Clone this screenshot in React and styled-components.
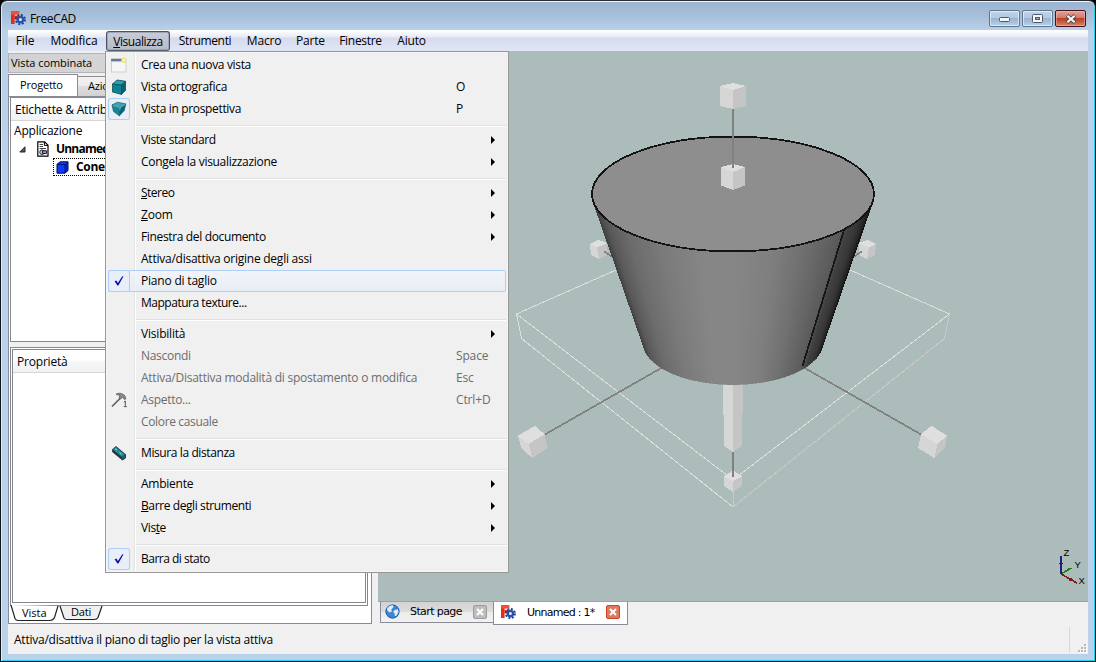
import React from 'react';
import styled, { createGlobalStyle, css } from 'styled-components';

const Global = createGlobalStyle`
  html, body { margin: 0; padding: 0; background: #000; }
  body { font-family: "Open Sans", "Noto Sans", sans-serif; font-size: 12px; color: #000; overflow: hidden; }
  * { box-sizing: border-box; }
  svg { display: block; }
`;

/* ---------- window chrome ---------- */
const Window = styled.div`
  position: relative;
  width: 1096px;
  height: 662px;
  display: flex;
  flex-direction: column;
  background: linear-gradient(180deg, #9ab3d0 0, #a7bfda 15px, #bad1ea 30px, #b9d1ea 100%);
  border: 1px solid #101418;
  border-top-color: #2a2c30;
  border-radius: 7px 7px 0 0;
  box-shadow: inset 1px 0 0 #dfeaf6, inset 0 1px 0 #eef5fb, inset -1px -1px 0 #26d0ee;
  padding: 0 7px 7px 7px;
`;
const TitleBar = styled.header`
  height: 29px;
  flex: none;
  display: flex;
  align-items: center;
  padding: 5px 2px 0 2px;
`;
const TitleText = styled.span`
  margin-left: 4px;
  flex: 1;
  line-height: 16px;
  padding-top: 2px;
  letter-spacing: -0.35px;
`;
const Controls = styled.div`
  display: flex;
  gap: 2px;
`;
const ControlButton = styled.span`
  width: 31px;
  height: 17px;
  margin-top: 1px;
  display: flex;
  align-items: center;
  justify-content: center;
  border: 1px solid ${p => (p.$close ? '#43101c' : '#5f7590')};
  border-radius: 2px;
  background: ${p => (p.$close
    ? 'linear-gradient(180deg,#e0a296 0,#d3796a 7px,#b93d22 7px,#c65a40 11px,#d78a6b 100%)'
    : 'linear-gradient(180deg,#c0d3e8 0,#b3c9e1 7px,#98b4d0 7px,#a5c0dc 11px,#b9d2ea 100%)')};
  box-shadow: inset 0 0 0 1px ${p => (p.$close ? 'rgba(255,200,190,.45)' : 'rgba(255,255,255,.55)')};
`;
const Client = styled.div`
  flex: 1;
  min-height: 0;
  display: flex;
  flex-direction: column;
  background: #f0f0f0;
`;

/* ---------- menu bar ---------- */
const MenuBar = styled.nav`
  height: 21px;
  flex: none;
  display: flex;
  align-items: stretch;
  background: linear-gradient(180deg, #fff 0, #e6ecf5 7px, #d5daee 8px, #e1e6f6 100%);
`;
const MenuTitle = styled.span`
  width: ${p => p.$w}px;
  display: flex;
  align-items: center;
  justify-content: center;
  line-height: 19px;
  letter-spacing: ${p => p.$ls || 0}px;
  ${p => p.$open && css`
    margin-top: 1px;
    border: 1px solid #4a5260;
    border-bottom-color: #5a6270;
    border-radius: 3px;
    background: linear-gradient(180deg, #c8ccd6 0, #b6bbcb 100%);
    box-shadow: inset 0 0 0 1px #a0a6b4;
  `}
`;

/* ---------- body ---------- */
const Body = styled.div`
  height: 574px;
  flex: none;
  display: flex;
`;
const Dock = styled.aside`
  width: 364px;
  flex: none;
  display: flex;
  flex-direction: column;
  padding-top: 2px;
`;
const DockTitle = styled.div`
  height: 20px;
  flex: none;
  border: 1px solid #b4b4b4;
  background: linear-gradient(90deg, #d2d2d2, #dcdcdc);
  line-height: 18px;
  padding-left: 2px;
  font-size: 11px;
  letter-spacing: -0.05px;
`;
const TabRow = styled.div`
  height: 22px;
  flex: none;
  margin-top: 1px;
  display: flex;
  align-items: flex-end;
`;
const DockTab = styled.span`
  width: ${p => p.$w}px;
  height: ${p => (p.$on ? 22 : 20)}px;
  flex: none;
  border: 1px solid #898c95;
  border-bottom: 0;
  border-left-width: ${p => (p.$on ? 1 : 0)}px;
  background: ${p => (p.$on ? '#fff' : 'linear-gradient(180deg,#f2f2f2,#ebebeb 50%,#dddddd 50%,#d2d2d2)')};
  font-size: 11px;
  line-height: ${p => (p.$on ? 19 : 18)}px;
  padding-left: ${p => (p.$on ? 11 : 10)}px;
  letter-spacing: -0.2px;
`;
const DockPane = styled.div`
  flex: 1;
  min-height: 0;
  display: flex;
  flex-direction: column;
  border: 1px solid #898c95;
  background: #fff;
  padding: 0 3px 17px 1px;
  margin-bottom: 1px;
`;
const Tree = styled.div`
  height: 245px;
  flex: none;
  border: 1px solid #828790;
  background: #fff;
  white-space: nowrap;
  overflow: hidden;
`;
const Header = styled.div`
  height: 23px;
  line-height: 23px;
  margin-bottom: 1px;
  padding-left: 4px;
  background: linear-gradient(180deg, #fff 0, #fff 45%, #f5f6f8 55%, #f1f2f4 100%);
  border-bottom: 1px solid #d5d5d5;
  letter-spacing: ${p => p.$ls}px;
`;
const TreeRow = styled.div`
  height: 18px;
  display: flex;
  align-items: center;
  line-height: 18px;
  padding-left: ${p => p.$indent}px;
  font-weight: ${p => (p.$bold ? 700 : 400)};
  letter-spacing: ${p => p.$ls || 0}px;
`;
const FocusBox = styled.span`
  display: flex;
  align-items: center;
  gap: 7px;
  width: 120px;
  height: 18px;
  padding-left: 2px;
  border: 1px dotted #000;
`;
const TreeGap = styled.span`
  width: ${p => p.$w}px;
`;
const Splitter = styled.div`
  height: 5px;
  flex: none;
  background: #f0f0f0;
`;
const PropertyFrame = styled.div`
  flex: 1;
  border: 1px solid #828790;
  padding: 1px 1px 2px;
  display: flex;
`;
const PropertyBox = styled.div`
  flex: 1;
  border: 1px solid #828790;
  background: #fff;
`;
const SheetTabs = styled.svg`
  height: 18px;
  margin: -1px 0 -17px;
  flex: none;
`;

const Main = styled.main`
  flex: 1;
  display: flex;
  flex-direction: column;
  padding-left: 6px;
`;
const View = styled.svg`
  flex: none;
  background: #abbcbb;
`;
const DocTabs = styled.div`
  height: 24px;
  flex: none;
  display: flex;
  align-items: flex-start;
  border-top: 1px solid #a0a0a0;
  padding-left: 2px;
  font-family: "DejaVu Sans", sans-serif;
`;
const DocTab = styled.span`
  width: ${p => p.$w}px;
  height: ${p => (p.$on ? 23 : 21)}px;
  display: flex;
  align-items: center;
  border: 1px solid #898c95;
  border-top: 0;
  border-right-width: ${p => (p.$on ? 1 : 0)}px;
  background: ${p => (p.$on ? '#fff' : 'linear-gradient(180deg,#d2d2d2 0,#dddddd 50%,#ebebeb 50%,#f2f2f2 100%)')};
  padding: 0 ${p => (p.$on ? 7 : 6)}px ${p => (p.$on ? 2 : 1)}px ${p => (p.$on ? 6 : 4)}px;
  font-size: 11px;
  letter-spacing: ${p => p.$ls}px;
  white-space: pre;
`;
const DocLabel = styled.span`
  flex: 1;
  padding-left: ${p => p.$pad}px;
`;
const CloseBox = styled.span`
  width: 14px;
  height: 14px;
  display: flex;
  align-items: center;
  justify-content: center;
  border: 1px solid ${p => (p.$hot ? '#c8422c' : '#9c9c9c')};
  border-radius: 2px;
  background: ${p => (p.$hot ? '#dd7a5c' : '#bdbdbd')};
`;

const StatusBar = styled.footer`
  flex: 1;
  display: flex;
  align-items: flex-start;
  padding: 2px 0 0 6px;
  line-height: 25px;
`;
const StatusText = styled.span`
  flex: 1;
  letter-spacing: ${p => p.$ls}px;
`;
const StatusRule = styled.span`
  width: 1px;
  height: 25px;
  background: #d7d7d7;
  margin-right: 6px;
`;

/* ---------- drop-down ---------- */
const Dropdown = styled.div`
  position: absolute;
  left: 104px;
  top: 50px;
  width: 404px;
  height: 522px;
  border: 1px solid #979797;
  padding: 2px;
  background: linear-gradient(90deg, #f0f0f0 28px, #e2e3e3 28px, #e2e3e3 29px, #fff 29px, #fff 30px, #f0f0f0 30px);
  box-shadow: inset 0 0 0 1px #f5f5f5;
`;
const Item = styled.div`
  height: 22px;
  display: flex;
  align-items: center;
  color: ${p => (p.$off ? '#6d6d6d' : '#000')};
  border-radius: 2px;
  ${p => p.$hover && css`
    background: linear-gradient(180deg, rgba(242,246,252,.75), rgba(228,236,247,.75));
    box-shadow: inset 0 0 0 1px #aecff7;
  `}
`;
const IconCell = styled.span`
  width: 22px;
  height: 22px;
  flex: none;
  display: flex;
  align-items: center;
  justify-content: center;
  border-radius: 3px;
  ${p => p.$checked && css`
    background: #e8eff8;
    box-shadow: inset 0 0 0 1px #aecff7;
  `}
`;
const ItemText = styled.span`
  width: 326px;
  flex: none;
  padding-left: 11px;
  line-height: 20px;
  white-space: nowrap;
  letter-spacing: ${p => p.$ls}px;
`;
const Shortcut = styled.span`
  width: 35px;
  line-height: 20px;
  letter-spacing: -0.15px;
`;
const Arrow = styled.span`
  border-left: 4px solid #000;
  border-top: 4px solid transparent;
  border-bottom: 4px solid transparent;
`;
const Rule = styled.div`
  height: 2px;
  margin: 5px 0 2px 28px;
  border-top: 1px solid #e0e0e0;
  border-bottom: 1px solid #fff;
`;

/* ---------- icons ---------- */
const Logo = () => (
  <svg width="16" height="16" viewBox="0 0 16 16">
    <rect x="1" y="1" width="3.6" height="13" fill="#e62a18" />
    <rect x="1" y="1" width="8.4" height="3.6" fill="#f4502a" />
    <rect x="4.6" y="6" width="3.4" height="3.2" fill="#d42814" />
    <circle cx="10.4" cy="9.6" r="4.6" fill="none" stroke="#1f3f92" strokeWidth="1.9" strokeDasharray="1.9 1.71" />
    <circle cx="10.4" cy="9.6" r="2.7" fill="#e4ecf8" stroke="#2a52aa" strokeWidth="2.4" />
  </svg>
);
const NewView = () => (
  <svg width="16" height="16" viewBox="0.5 0 16 16">
    <rect x="1" y="2" width="14.5" height="13" fill="#f6f6f4" stroke="#cfcfcf" />
    <rect x=".6" y="1.8" width="12.4" height="2.6" fill="#66789c" />
    <circle cx="13.4" cy="3.2" r="2.7" fill="#efe27a" />
    <circle cx="13.4" cy="3.2" r="1.2" fill="#fffbd0" />
  </svg>
);
const OrthoCube = () => (
  <svg width="16" height="16" viewBox="0 0 16 16">
    <path d="M1.5 5 6 1 14.5 2.2 10.5 6.2z" fill="#2ba0b2" stroke="#0b4e5c" strokeWidth=".8" />
    <path d="M1.5 5 10.5 6.2V15.4L1.5 13z" fill="#0f8396" stroke="#0b4e5c" strokeWidth=".8" />
    <path d="M10.5 6.2 14.5 2.2V11.2L10.5 15.4z" fill="#076374" stroke="#0b4e5c" strokeWidth=".8" />
  </svg>
);
const PerspCube = () => (
  <svg width="16" height="16" viewBox="0 0 16 16">
    <path d="M1 4 6.5 1.2 14.8 3 9.2 6.4z" fill="#3aa6b6" stroke="#1c6674" strokeWidth=".8" />
    <path d="M1 4 9.2 6.4 8.4 14.8 2.6 10.6z" fill="#12889a" stroke="#1c6674" strokeWidth=".8" />
    <path d="M9.2 6.4 14.8 3 13.2 9.6 8.4 14.8z" fill="#086678" stroke="#1c6674" strokeWidth=".8" />
    <path d="M2 4.4 9.2 6.4 14 3.5M9.2 6.4 8.8 9" fill="none" stroke="#9ad4dc" strokeWidth=".7" />
  </svg>
);
const Hammer = () => (
  <svg width="17" height="17" viewBox="0 0 17 17">
    <path d="M1 14.5 9.5 6" stroke="#5c5c5c" strokeWidth="1.6" fill="none" />
    <path d="M5 2.2C8 .6 11.5 1 14 4l.8 3-1.6.3-1.5-2.2L9.6 7 8 5.2 9.2 3.6z" fill="#8a8a8a" stroke="#5c5c5c" strokeWidth=".8" />
    <path d="M12.8 10.2 14.3 9v5.5M12.8 14.6h3" stroke="#555" fill="none" />
  </svg>
);
const Ruler = () => (
  <svg width="16" height="16" viewBox="0 0 16 16">
    <path d="M1 4.5 5 1 15 9.5V13L11.5 15.4 1.2 7z" fill="#26343a" />
    <path d="M1.8 4.6 5 2 14 9.6 11 12z" fill="#1f8c9e" />
    <path d="M4.2 3.8 6 5.2M8.6 7.6l1.8 1.4" stroke="#9adbe4" strokeWidth="1" />
    <path d="M11 12.6 14.3 10.1V12.6L11.4 14.6z" fill="#136b7c" />
  </svg>
);
const Check = () => (
  <svg width="12" height="12" viewBox="0 0 12 12">
    <path d="M1.6 6.2 3.4 5.4 4.9 8 9.3 1.2 10.4 1.4 5.4 10.6H4.4z" fill="#0c12a8" />
  </svg>
);
const DocIcon = () => (
  <svg width="12" height="16" viewBox="0 0 12 16">
    <path d="M.8.8H7.6L11 4.2V15.2H.8z" fill="#fff" stroke="#000" strokeWidth="1.2" />
    <path d="M7.4 1V4.4H11" fill="none" stroke="#000" />
    <path d="M2.6 3.5H6M2.6 5.5H6M2.6 7.5H9" stroke="#333" strokeWidth=".9" />
    <circle cx="5" cy="11.2" r="2.3" fill="#8fe0dc" stroke="#000" strokeWidth=".8" />
    <rect x="5.6" y="9.8" width="3.9" height="2.6" fill="#c478d4" stroke="#000" strokeWidth=".8" />
  </svg>
);
const BlueCube = () => (
  <svg width="13" height="13" viewBox="0 0 13 13">
    <path d="M1 3.2 4.2.8H12V9.6L9 12.2H1z" fill="#0a3cff" stroke="#000b50" />
    <path d="M9.5 4 11.6 2V9.4L9.5 11.4z" fill="#0620b0" />
    <path d="M1 3.4 9 3.6 12 1M9 3.6V12" fill="none" stroke="#000b50" strokeWidth=".8" />
  </svg>
);
const Globe = () => (
  <svg width="15" height="15" viewBox="0 0 15 15">
    <circle cx="7.5" cy="7.5" r="7" fill="#3f86d0" />
    <circle cx="7.5" cy="7.5" r="6.5" fill="none" stroke="#2a62aa" />
    <path d="M2 4.5C3.4 2 6 .9 8 1.2L8.6 3 6.4 5.2 6.8 7.4 4.8 8.4 2.4 6.8zM9.2 6.2 12.8 5.2 13.6 8 11.6 11.6 9.8 12.2 9.6 9.4 8.2 8z" fill="#d8ecfb" />
  </svg>
);
const Cross = () => (
  <svg width="8" height="8" viewBox="0 0 8 8">
    <path d="M1 1 7 7M7 1 1 7" stroke="#fff" strokeWidth="2" />
  </svg>
);
const Expander = () => (
  <svg width="7" height="7" viewBox="0 0 7 7"><path d="M6 .8V6H.8z" fill="#595959" stroke="#262626" /></svg>
);
const Grip = () => (
  <svg width="12" height="10" viewBox="0 0 12 10" shapeRendering="crispEdges">
    {[[8, 0], [8, 3], [5, 3], [8, 6], [5, 6], [2, 6]].map(([x, y]) => (
      <g key={`${x}-${y}`}>
        <rect x={x + 1} y={y + 1} width="2" height="2" fill="#fff" />
        <rect x={x} y={y} width="2" height="2" fill="#b8b8b8" />
      </g>
    ))}
  </svg>
);
const GripBox = styled.span`
  align-self: flex-start;
  margin-top: 17px;
`;

/* ---------- 3D scene ---------- */
const STOPS = [[-1, 0x38], [-0.97, 0x42], [-0.9, 0x58], [-0.75, 0x6b], [-0.5, 0x7b], [-0.2, 0x86], [0, 0x86], [0.25, 0x80], [0.5, 0x70], [0.77, 0x59], [0.8, 0x42], [0.88, 0x38], [0.95, 0x22], [1, 0x04]];
const shadeAt = t => {
  const i = Math.max(1, STOPS.findIndex(s => s[0] >= t));
  const [a, va] = STOPS[i - 1];
  const [b, vb] = STOPS[i];
  return Math.round(va + ((vb - va) * (t - a)) / (b - a));
};
const N = 90;
/* side facets of the cone, back ones first so that front ones cover them */
const facets = Array.from({ length: N }, (_, i) => {
  const step = (Math.PI + 0.1) / N;
  const a0 = -0.05 + step * i;
  const a1 = a0 + step;
  const top = a => `${733 + 141 * Math.cos(a)},${194 + 57.3 * Math.sin(a)}`;
  const bot = a => `${733 + 89.5 * Math.cos(a)},${343 + 41.6 * Math.sin(a)}`;
  const mid = (a0 + a1) / 2;
  const v = shadeAt(Math.cos(mid));
  return { depth: Math.sin(mid), pts: `${top(a0)} ${top(a1)} ${bot(a1)} ${bot(a0)}`, fill: `rgb(${v},${v},${v})` };
}).sort((p, q) => p.depth - q.depth);

const Box = ({ top, left, right }) => (
  <g>
    <polygon points={left} fill="#d6d6d6" />
    <polygon points={right} fill="#c5c5c5" />
    <polygon points={top} fill="#dfdfdf" />
  </g>
);

const Scene = () => (
  <View width="710" height="550" viewBox="378 51 710 550" shapeRendering="crispEdges">
    <g fill="none" stroke="#dedede" strokeWidth="1">
      <path d="M616 270 516.5 314 726 474.5M850 270 949.5 314 740 474.5M516.5 314 521.5 338.5 733 507" />
      <path d="M949.5 314 944.5 338.5 733 507V490" stroke="#c9c9c9" />
    </g>
    <g stroke="#808080" strokeWidth="1.7">
      <path d="M664 366.5 544 435M802 366.5 922 435" />
    </g>
    <Box top="590,244 598,240 607.5,243 597,247.5" left="590,244 597,247.5 599,259 591,255" right="597,247.5 607.5,243 607,255 599,259" />
    <Box top="876,244 868,240 858.5,243 869,247.5" left="858.5,243 869,247.5 867,259 859,255" right="869,247.5 876,244 875,255 867,259" />
    <path d="M604 251.5 614 258M862 251.5 852 258" stroke="#808080" strokeWidth="1.7" />
    {facets.map(f => <polygon key={f.pts} points={f.pts} fill={f.fill} stroke={f.fill} strokeWidth=".6" />)}
    <ellipse cx="733" cy="194" rx="141" ry="57.4" fill="#8e8e8e" stroke="#141414" strokeWidth="1.8" />
    <path d="M844 230 802.5 366" stroke="#161616" strokeWidth="1.8" />
    <Box top="720,86 733,83 746,86 733,90" left="720,86 733,90 733,109 720,106" right="733,90 746,86 746,106 733,109" />
    <Box top="721,167 733,164 745,167 733,172" left="721,167 733,172 733,190 721,185.5" right="733,172 745,167 745,185.5 733,190" />
    <rect x="732" y="109" width="2" height="59" fill="#808080" />
    <Box top="518,435.7 535,425.7 544.5,434.3 528.7,444" left="518,435.7 528.7,444 532.3,458 521.3,448" right="528.7,444 544.5,434.3 547.7,448 532.3,458" />
    <Box top="947,435.7 931.5,425.7 921,434.3 937.5,444" left="921,434.3 937.5,444 934.3,458 918,448" right="937.5,444 947,435.7 945,448 934.3,458" />
    <path d="M723 384.5H733V452L724 446z" fill="#d6d6d6" />
    <path d="M733 384.5H743L742 446 733 452z" fill="#c5c5c5" />
    <Box top="724,476.3 733,470.5 742,476.3 733,481" left="724,476.3 733,481 733,492 724,486" right="733,481 742,476.3 742,486 733,492" />
    <rect x="732" y="452" width="2" height="25" fill="#808080" />
    <g fill="none" strokeWidth="1.6">
      <path d="M1061 574 1071.5 568" stroke="#1f7a24" />
      <path d="M1061 574 1077 583" stroke="#7c1c1c" />
      <path d="M1061 574V556" stroke="#20207c" strokeWidth="2" />
    </g>
    <path d="M1059 563.5 1061 560 1063 563.5z" fill="#20207c" />
    <path d="M1065.5 570.5 1068 568 1071 568.5 1068 571.5z" fill="#1f7a24" />
    <path d="M1069 577.5 1072 578.5 1074.5 582 1069 580.5z" fill="#7c1c1c" />
    <g fontFamily="Liberation Sans, sans-serif" fontSize="9.5" fill="#000">
      <text x="1063.5" y="556">Z</text>
      <text x="1074.5" y="568">Y</text>
      <text x="1078.5" y="584">X</text>
    </g>
  </View>
);

/* ---------- content ---------- */
const MENUS = [
  ['File', 34, -0.1], ['Modifica', 64, -0.1], ['Visualizza', 64, -0.45], ['Strumenti', 70, -0.35],
  ['Macro', 48, -0.2], ['Parte', 45, -0.2], ['Finestre', 55, -0.3], ['Aiuto', 47, -0.2],
];
const ITEMS = [
  { t: 'Crea una nuova vista', ls: -0.35, icon: <NewView /> },
  { t: 'Vista ortografica', ls: -0.3, icon: <OrthoCube />, key: 'O' },
  { t: 'Vista in prospettiva', ls: -0.35, icon: <PerspCube />, key: 'P', on: true },
  null,
  { t: 'Viste standard', ls: -0.4, sub: true },
  { t: 'Congela la visualizzazione', ls: -0.3, sub: true },
  null,
  { t: <><u>S</u>tereo</>, ls: -0.5, sub: true },
  { t: <><u>Z</u>oom</>, sub: true },
  { t: 'Finestra del documento', ls: -0.35, sub: true },
  { t: 'Attiva/disattiva origine degli assi', ls: -0.24 },
  { t: 'Piano di taglio', icon: <Check />, on: true, hover: true },
  { t: 'Mappatura texture...', ls: -0.48 },
  null,
  { t: 'Visibilità', sub: true },
  { t: 'Nascondi', ls: -0.3, off: true, key: 'Space' },
  { t: 'Attiva/Disattiva modalità di spostamento o modifica', ls: -0.25, off: true, key: 'Esc' },
  { t: 'Aspetto...', ls: -0.3, off: true, key: 'Ctrl+D', icon: <Hammer /> },
  { t: 'Colore casuale', ls: -0.35, off: true },
  null,
  { t: 'Misura la distanza', ls: -0.4, icon: <Ruler /> },
  null,
  { t: 'Ambiente', ls: -0.25, sub: true },
  { t: <><u>B</u>arre degli strumenti</>, ls: -0.4, sub: true },
  { t: <>Vis<u>t</u>e</>, ls: -0.4, sub: true },
  null,
  { t: 'Barra di stato', ls: -0.5, icon: <Check />, on: true },
];

export default function App() {
  return (
    <>
      <Global />
      <Window>
        <TitleBar>
          <Logo />
          <TitleText>FreeCAD</TitleText>
          <Controls>
            <ControlButton>
              <svg width="12" height="6" viewBox="0 0 12 6"><rect x=".5" y="1.5" width="10" height="4" rx="1" fill="#f6f6f6" stroke="#50586a" /></svg>
            </ControlButton>
            <ControlButton>
              <svg width="11" height="9" viewBox="0 0 11 9"><rect x=".5" y=".5" width="10" height="8" rx="1" fill="#f6f6f6" stroke="#50586a" /><rect x="3.5" y="3.5" width="4" height="2" fill="#8fabc8" stroke="#50586a" /></svg>
            </ControlButton>
            <ControlButton $close>
              <svg width="12" height="10" viewBox="0 0 12 10"><path d="M2 1.5 10 8.5M10 1.5 2 8.5" stroke="#4e4a58" strokeWidth="4" /><path d="M2.4 1.8 9.6 8.2M9.6 1.8 2.4 8.2" stroke="#f6f6f6" strokeWidth="2.2" /></svg>
            </ControlButton>
          </Controls>
        </TitleBar>
        <Client>
          <MenuBar>
            {MENUS.map(([name, w, ls], i) => (
              <MenuTitle key={name} $w={w} $ls={ls} $open={i === 2}>
                {i === 2 ? <span><u>V</u>isualizza</span> : name}
              </MenuTitle>
            ))}
          </MenuBar>
          <Body>
            <Dock>
              <DockTitle>Vista combinata</DockTitle>
              <TabRow>
                <DockTab $on $w={70}>Progetto</DockTab>
                <DockTab $w={60}>Azioni</DockTab>
              </TabRow>
              <DockPane>
                <Tree>
                  <Header $ls={-0.2}>Etichette &amp; Attributi</Header>
                  <TreeRow $indent={3} $ls={-0.2}>Applicazione</TreeRow>
                  <TreeRow $indent={8} $bold $ls={-0.8}>
                    <Expander /><TreeGap $w={11} /><DocIcon /><TreeGap $w={7} />Unnamed
                  </TreeRow>
                  <TreeRow $indent={42} $bold $ls={-0.35}><FocusBox><BlueCube />Cone</FocusBox></TreeRow>
                </Tree>
                <Splitter />
                <PropertyFrame>
                  <PropertyBox><Header $ls={-0.2}>Proprietà</Header></PropertyBox>
                </PropertyFrame>
                <SheetTabs width="110" viewBox="0 0 110 18">
                  <path d="M50 1 54 14Q55 15.5 57 15.5H84Q87 15.5 88 13.5L92 1z" fill="#f0f0f0" />
                  <path d="M50 1 54 13Q55 14.5 57 14.5H84Q87 14.5 88 12.5L92 1" fill="none" stroke="#222" strokeWidth="1.2" />
                  <path d="M1 0 5 13.5Q6 15.5 8 15.5H40Q43 15.5 44.5 12.5L48 1" fill="#fff" stroke="#222" strokeWidth="1.2" />
                  <text x="12" y="12" fontSize="11">Vista</text>
                  <text x="61" y="11" fontSize="11" letterSpacing="-.2">Dati</text>
                </SheetTabs>
              </DockPane>
            </Dock>
            <Main>
              <Scene />
              <DocTabs>
                <DocTab $w={113} $ls={-0.6}><Globe /><DocLabel $pad={10}>Start page</DocLabel><CloseBox><Cross /></CloseBox></DocTab>
                <DocTab $w={135} $on $ls={-0.75}><Logo /><DocLabel $pad={11}>Unnamed : 1*</DocLabel><CloseBox $hot><Cross /></CloseBox></DocTab>
              </DocTabs>
            </Main>
          </Body>
          <StatusBar>
            <StatusText $ls={-0.24}>Attiva/disattiva il piano di taglio per la vista attiva</StatusText>
            <StatusRule />
            <GripBox><Grip /></GripBox>
          </StatusBar>
        </Client>
        <Dropdown>
          {ITEMS.map((it, i) => (it === null ? <Rule key={i} /> : (
            <Item key={i} $off={it.off} $hover={it.hover}>
              <IconCell $checked={it.on}>{it.icon}</IconCell>
              <ItemText $ls={it.ls ?? -0.2}>{it.t}</ItemText>
              <Shortcut>{it.key || ''}</Shortcut>
              {it.sub && <Arrow />}
            </Item>
          )))}
        </Dropdown>
      </Window>
    </>
  );
}
